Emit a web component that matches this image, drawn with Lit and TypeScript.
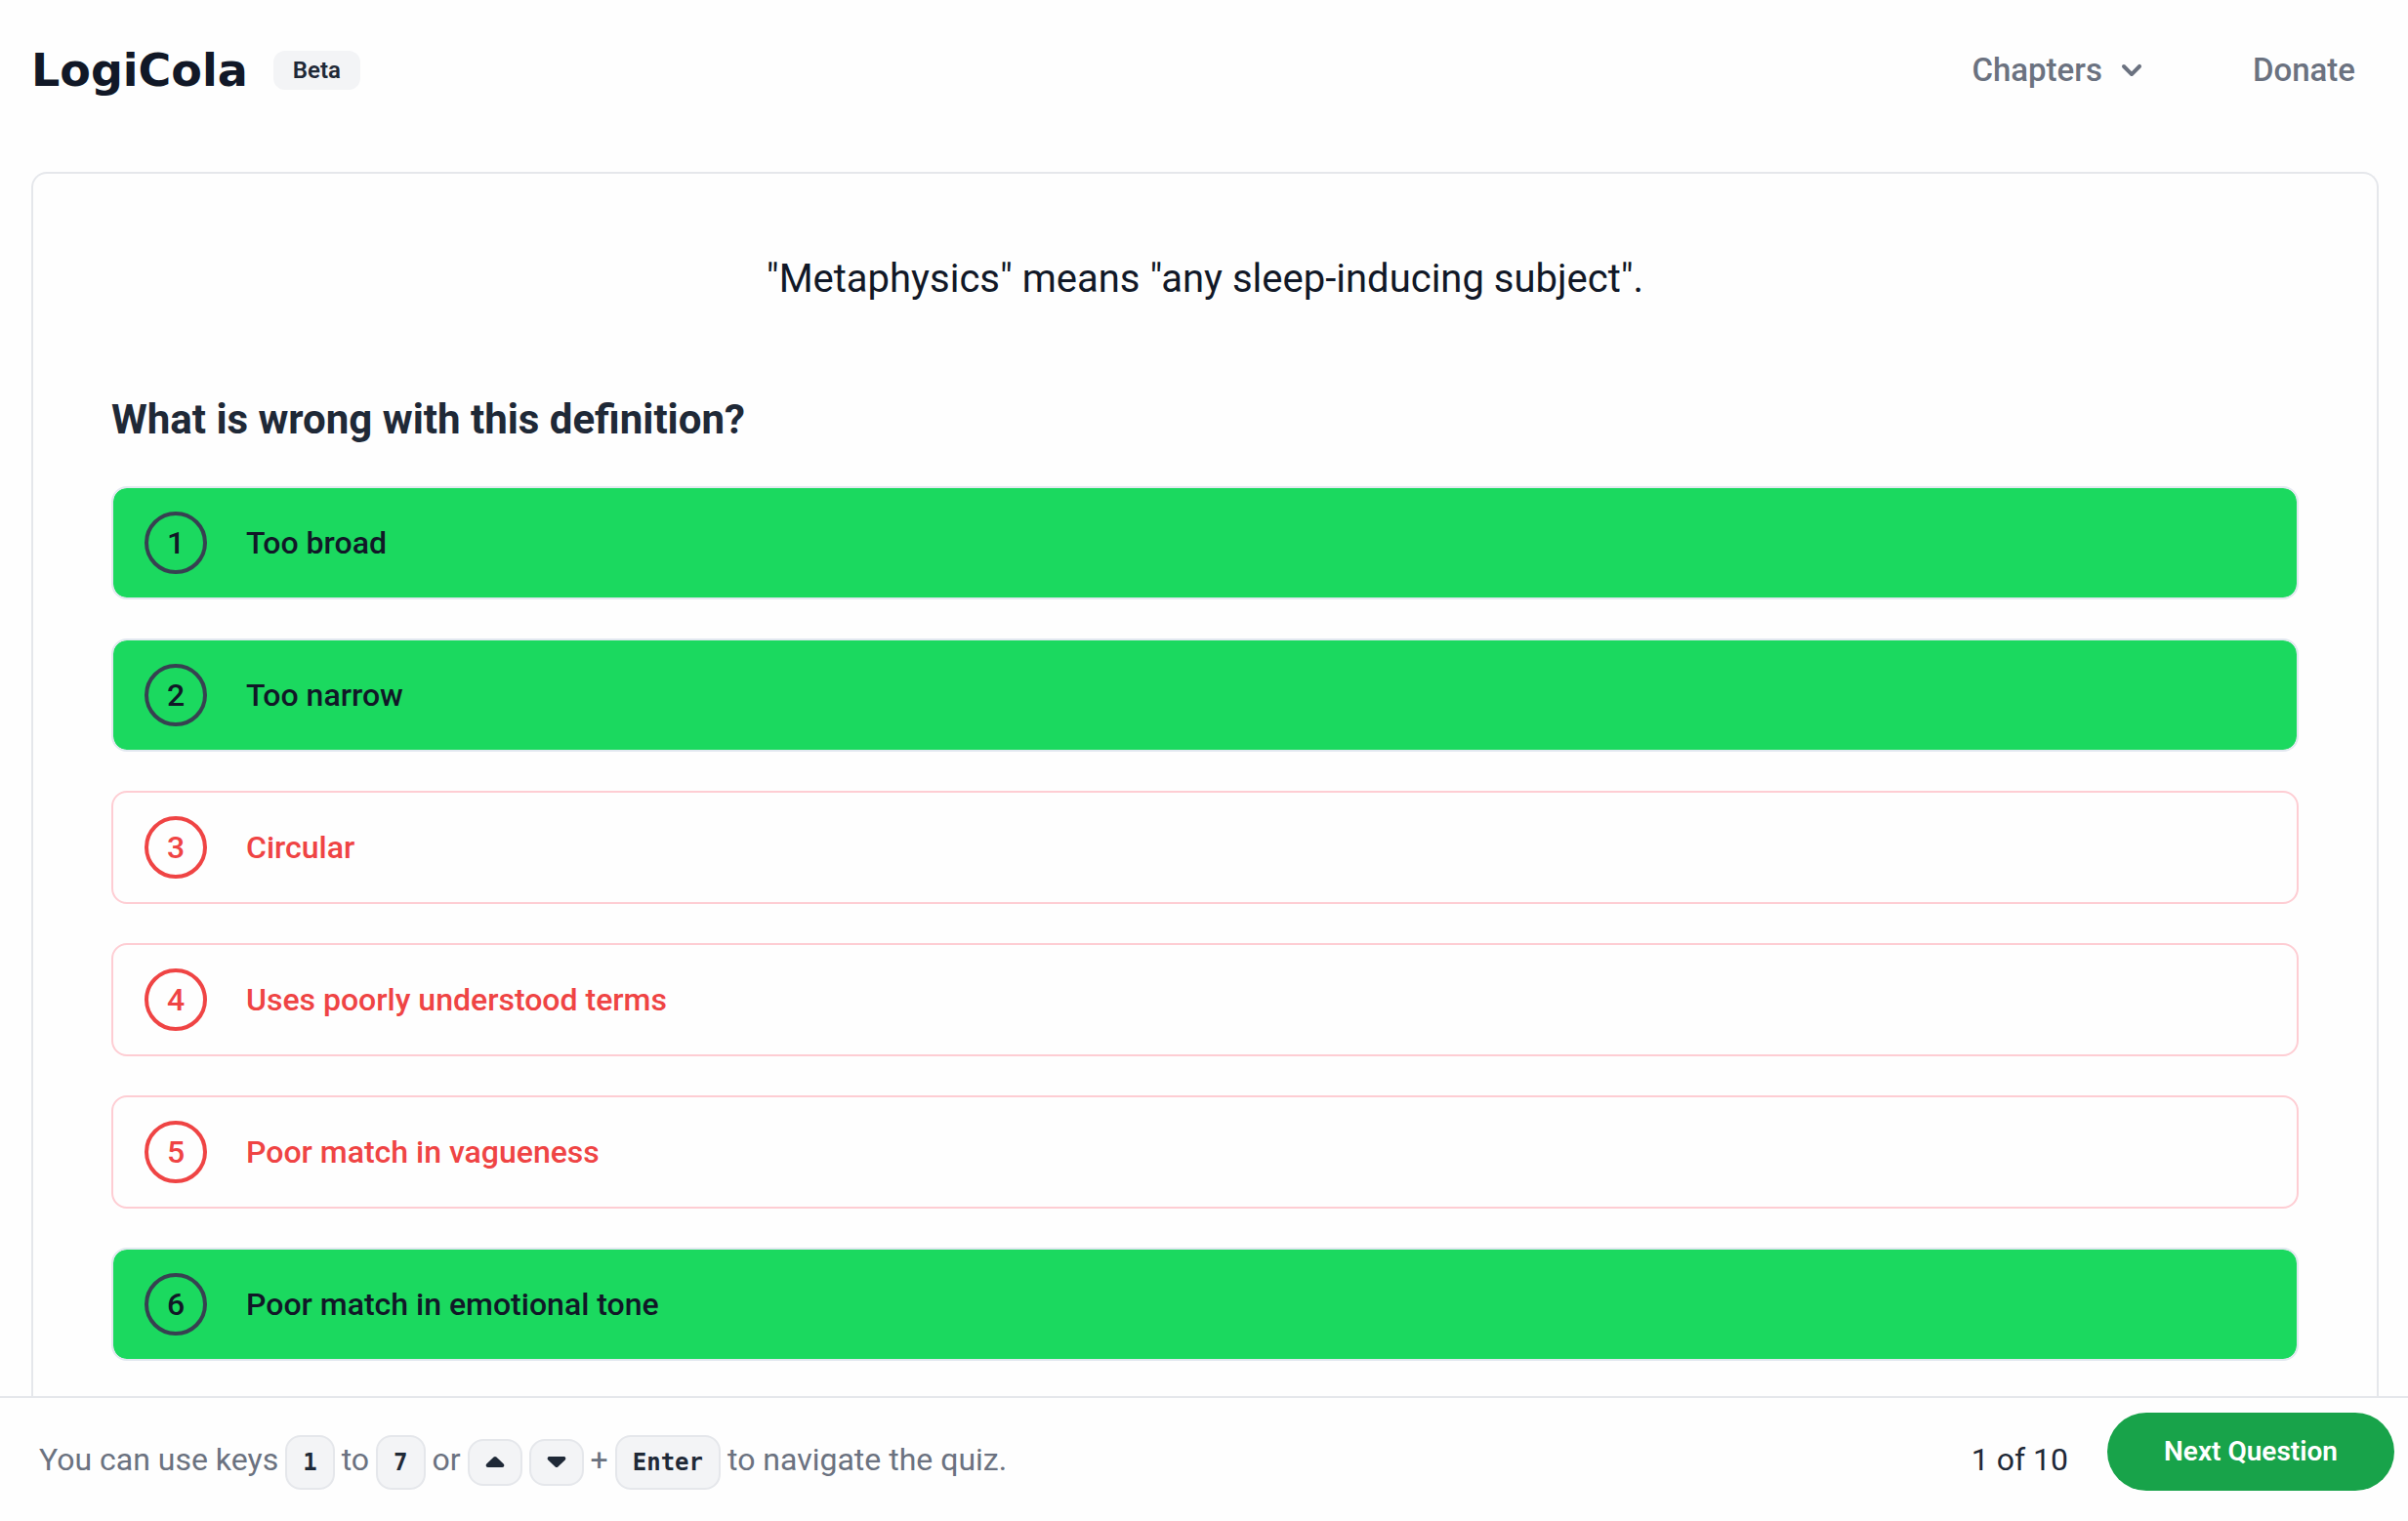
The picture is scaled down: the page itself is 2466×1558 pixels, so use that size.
import { LitElement, html, css } from "lit";
import { customElement, state } from "lit/decorators.js";
import { classMap } from "lit/directives/class-map.js";

interface Option {
  label: string;
  right: boolean;
}

@customElement("app-root")
export class AppRoot extends LitElement {
  @state() private options: Option[] = [
    { label: "Too broad", right: true },
    { label: "Too narrow", right: true },
    { label: "Circular", right: false },
    { label: "Uses poorly understood terms", right: false },
    { label: "Poor match in vagueness", right: false },
    { label: "Poor match in emotional tone", right: true },
  ];

  static styles = css`
    :host {
      display: grid;
      grid-template-rows: auto minmax(0, 1fr) auto;
      height: 100vh;
      background: #fefefe;
      color: #111827;
      font: 400 32px/48px Roboto, "Liberation Sans", sans-serif;
    }
    * { box-sizing: border-box; }
    button { font: inherit; color: inherit; margin: 0; padding: 0; border: 0; background: none; cursor: pointer; }
    .header {
      display: flex;
      align-items: center;
      justify-content: space-between;
      height: 144px;
      padding: 0 54px 0 32px;
    }
    .brand { display: flex; align-items: center; gap: 26px; }
    .logo {
      font: 700 46px/64px "DejaVu Sans", sans-serif;
      color: #111827;
      text-decoration: none;
    }
    .badge {
      padding: 4px 20px;
      border-radius: 12px;
      background: #f3f4f6;
      color: #1f2937;
      font-size: 24px;
      line-height: 32px;
      font-weight: 600;
    }
    .nav { display: flex; align-items: center; gap: 104px; color: #6b7280; font-size: 33px; font-weight: 500; }
    .nav a { color: inherit; text-decoration: none; }
    .chapters { display: flex; align-items: center; gap: 10px; }
    .chevron { width: 40px; height: 40px; fill: currentColor; }
    .main { display: flex; flex-direction: column; overflow: hidden; padding: 32px 30px 0 32px; }
    .card {
      flex: 1 0 auto;
      border: 2px solid #e5e7eb;
      border-bottom: 0;
      border-radius: 16px 16px 0 0;
      padding: 80px;
    }
    .statement { margin: 0; text-align: center; font-size: 40px; line-height: 56px; }
    .question { margin: 88px 0 40px; font-size: 42px; line-height: 56px; font-weight: 700; color: #1f2937; }
    .options { display: flex; flex-direction: column; gap: 40px; margin: 0; padding: 0; list-style: none; }
    .option {
      display: flex;
      align-items: center;
      gap: 40px;
      width: 100%;
      padding: 24px 32px;
      border: 2px solid #fecdd3;
      border-radius: 16px;
      color: #ef4444;
      font-weight: 500;
      text-align: left;
    }
    .number {
      display: flex;
      align-items: center;
      justify-content: center;
      width: 64px;
      height: 64px;
      border: 4px solid #ef4444;
      border-radius: 50%;
    }
    .right { border-color: #e2e8f0; background: #1bd95f; background-clip: padding-box; color: #111827; }
    .right .number { border-color: #374151; }
    .footer {
      display: flex;
      align-items: center;
      justify-content: space-between;
      height: 128px;
      padding: 0 14px 0 40px;
      border-top: 2px solid #e5e7eb;
      background: #fefefe;
    }
    .hint { display: flex; align-items: baseline; gap: 7px; margin: 0; padding-top: 6px; color: #6b7280; }
    kbd {
      display: flex;
      align-items: center;
      padding: 10px 16px;
      border: 2px solid #e5e7eb;
      border-radius: 16px;
      background: #f3f4f6;
      color: #1f2937;
      font: 700 24px/32px "DejaVu Sans Mono", monospace;
    }
    .arrow { align-self: center; padding: 10px 14px; }
    .arrow svg { width: 24px; height: 24px; fill: currentColor; }
    .progress { display: flex; align-items: center; gap: 40px; color: #1f2937; }
    .next {
      height: 80px;
      margin-bottom: 16px;
      padding: 0 58px;
      border-radius: 40px;
      background: #18a34a;
      color: #ffffff;
      font-size: 28px;
      line-height: 40px;
      font-weight: 600;
    }
  `;

  render() {
    return html`
      <header class="header">
        <div class="brand">
          <a class="logo" href="#">LogiCola</a>
          <span class="badge">Beta</span>
        </div>
        <nav class="nav">
          <button class="chapters" type="button">
            Chapters
            <svg class="chevron" viewBox="0 0 20 20" aria-hidden="true">
              <path fill-rule="evenodd" clip-rule="evenodd" d="M5.293 7.293a1 1 0 011.414 0L10 10.586l3.293-3.293a1 1 0 111.414 1.414l-4 4a1 1 0 01-1.414 0l-4-4a1 1 0 010-1.414z" />
            </svg>
          </button>
          <a href="#">Donate</a>
        </nav>
      </header>
      <main class="main">
        <section class="card">
          <p class="statement">"Metaphysics" means "any sleep-inducing subject".</p>
          <h2 class="question">What is wrong with this definition?</h2>
          <ul class="options">
            ${this.options.map(
              (option, i) => html`<li>
                <button type="button" class=${classMap({ option: true, right: option.right })}>
                  <span class="number">${i + 1}</span>
                  <span>${option.label}</span>
                </button>
              </li>`
            )}
          </ul>
        </section>
      </main>
      <footer class="footer">
        <p class="hint">
          <span>You can use keys</span><kbd>1</kbd><span>to</span><kbd>7</kbd><span>or</span>
          <kbd class="arrow"><svg viewBox="0 0 24 24" aria-hidden="true"><path d="M10.600 6.600a2 2 0 0 1 2.800 0l7.300 6.900c1.300 1.300.5 3.500-1.400 3.500H4.700c-1.900 0-2.700-2.200-1.400-3.500z" /></svg></kbd>
          <kbd class="arrow"><svg viewBox="0 0 24 24" aria-hidden="true"><path d="M10.600 16.400a2 2 0 0 0 2.800 0l7.300-6.900c1.300-1.300.5-3.500-1.400-3.500H4.700c-1.900 0-2.700 2.200-1.400 3.500z" /></svg></kbd>
          <span>+</span><kbd>Enter</kbd><span>to navigate the quiz.</span>
        </p>
        <div class="progress">
          <span>1 of 10</span>
          <button class="next" type="button">Next Question</button>
        </div>
      </footer>
    `;
  }
}
